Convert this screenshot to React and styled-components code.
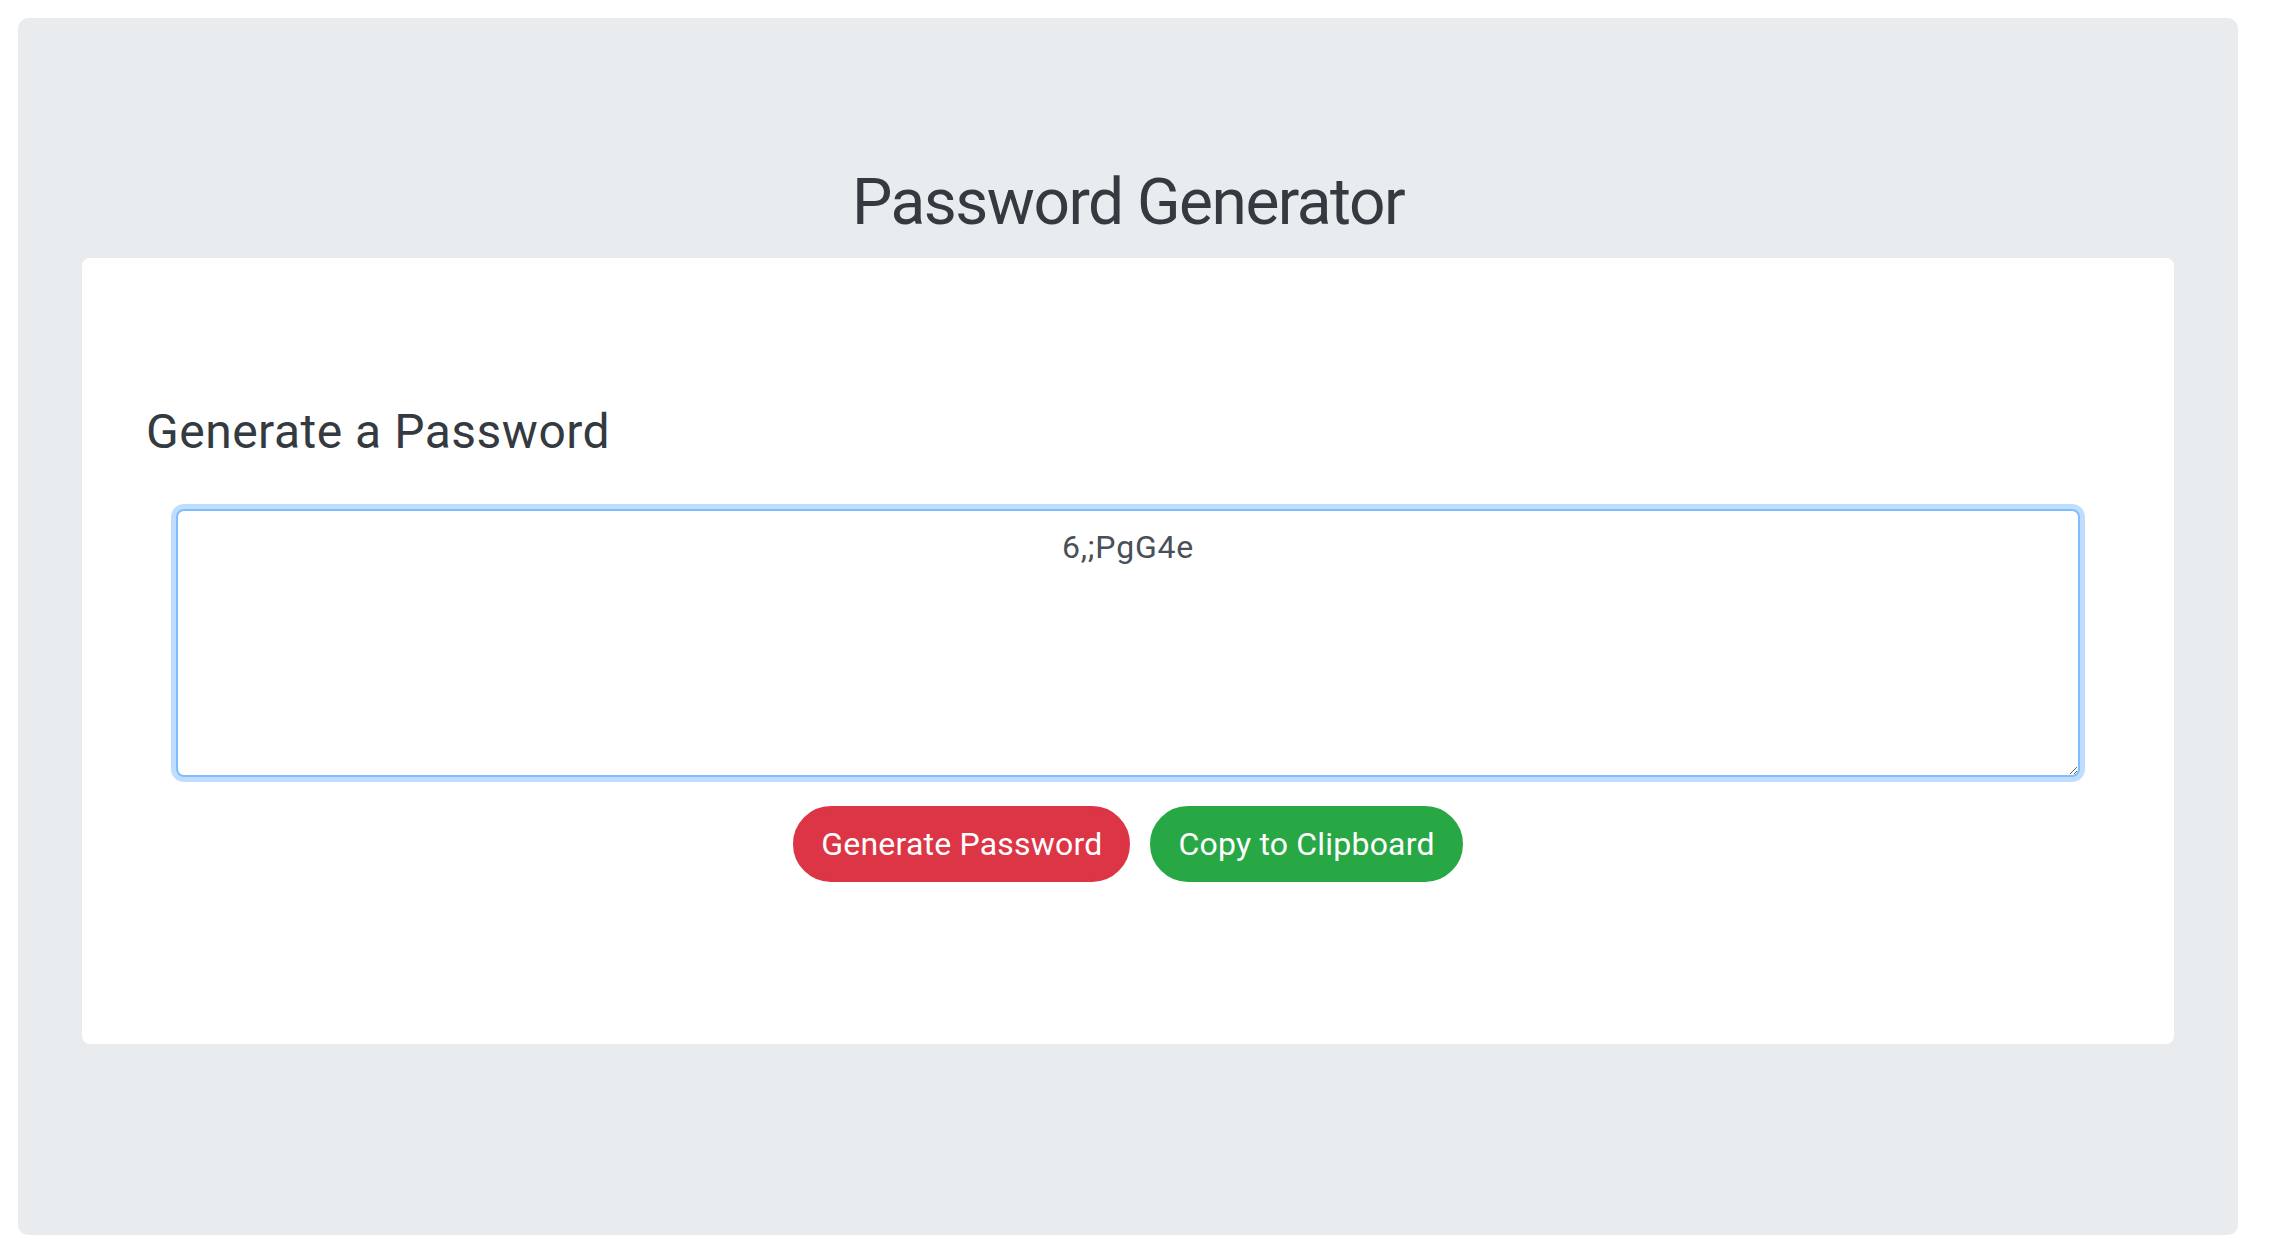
import React from 'react';
import styled, { createGlobalStyle } from 'styled-components';

const GlobalStyle = createGlobalStyle`
  html, body {
    margin: 0;
    padding: 0;
    background: #ffffff;
  }
  body {
    font-family: Roboto, Inter, "Liberation Sans", sans-serif;
    color: #343a40;
  }
  * {
    box-sizing: border-box;
  }
`;

const Jumbotron = styled.main`
  margin: 18px 50px 0 18px;
  padding: 147px 64px 191px;
  background: #e9ecef;
  border-radius: 10px;
`;

const Title = styled.h2`
  margin: 0 0 16px;
  font-size: 64px;
  font-weight: 400;
  line-height: 1.2;
  letter-spacing: -1.5px;
  text-align: center;
  color: #343a40;
`;

const Card = styled.section`
  background: #ffffff;
  border-radius: 8px;
  padding: 145px 64px 162px;
`;

const CardTitle = styled.h4`
  margin: 0 0 49px;
  font-size: 48px;
  font-weight: 400;
  line-height: 1.2;
  letter-spacing: 0.5px;
  color: #343a40;
`;

const PasswordBox = styled.textarea`
  display: block;
  width: calc(100% - 60px);
  height: 268px;
  margin: 0 30px;
  padding: 12px 24px;
  font-family: inherit;
  font-size: 32px;
  line-height: 1.5;
  letter-spacing: 0.8px;
  color: #495057;
  text-align: center;
  background: #ffffff;
  border: 2px solid #80bdff;
  border-radius: 8px;
  box-shadow: 0 0 0 5px rgba(0, 123, 255, 0.25);
  outline: none;
  resize: vertical;
`;

const Actions = styled.div`
  display: flex;
  justify-content: center;
  gap: 20px;
  margin-top: 29px;
`;

const PillButton = styled.button`
  padding: 12px 26px;
  font-family: inherit;
  font-size: 32px;
  line-height: 1.5;
  letter-spacing: 0.2px;
  color: #ffffff;
  background: ${props => props.variant === 'danger' ? '#dc3545' : '#28a745'};
  border: 2px solid ${props => props.variant === 'danger' ? '#dc3545' : '#28a745'};
  border-radius: 40px;
  cursor: pointer;
`;

const App = () => {
  return (
    <>
      <GlobalStyle />
      <Jumbotron>
        <Title>Password Generator</Title>
        <Card>
          <CardTitle>Generate a Password</CardTitle>
          <PasswordBox readOnly value="6,;PgG4e" aria-label="Generated Password" />
          <Actions>
            <PillButton variant="danger">Generate Password</PillButton>
            <PillButton variant="success">Copy to Clipboard</PillButton>
          </Actions>
        </Card>
      </Jumbotron>
    </>
  );
};

export default App;
